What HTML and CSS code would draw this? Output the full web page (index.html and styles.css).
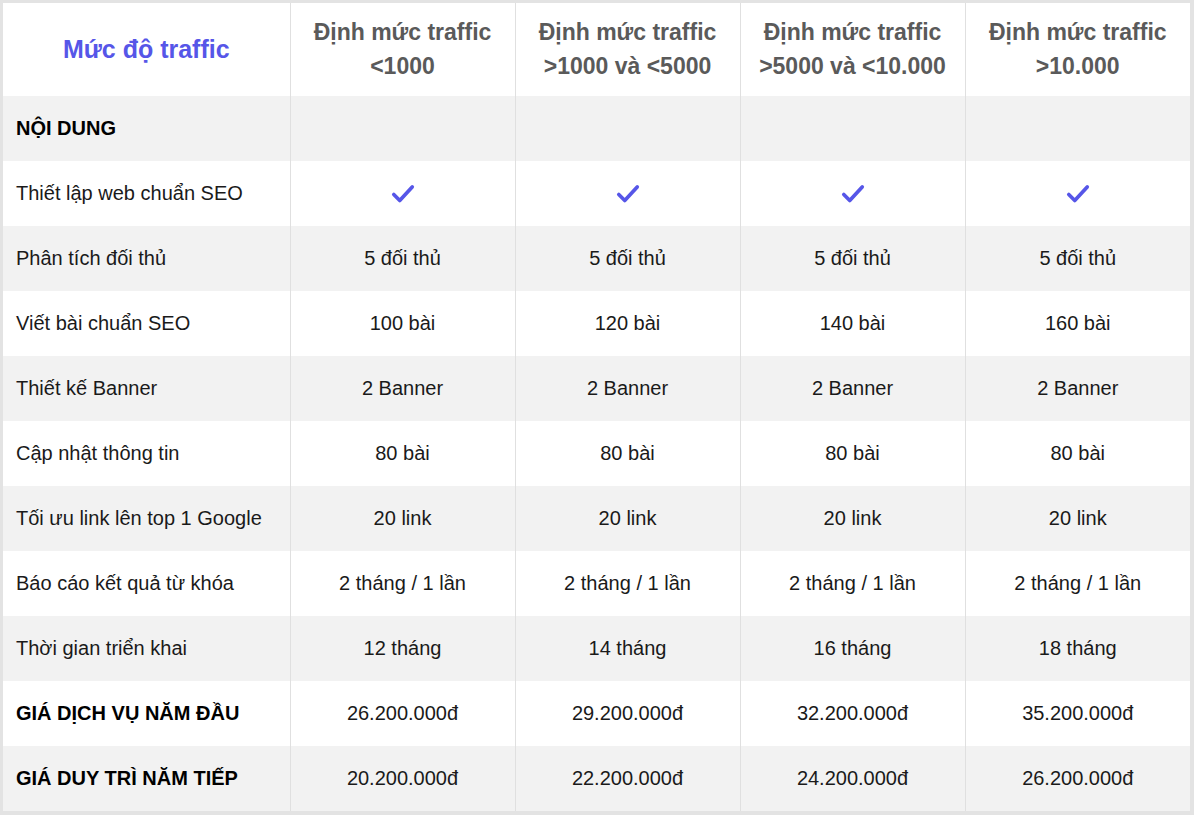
FILE: index.html
```html
<!DOCTYPE html>
<html lang="vi">
<head>
<meta charset="utf-8">
<title>Bảng giá SEO</title>
<link rel="stylesheet" href="styles.css">
</head>
<body>
<div class="frame">
<table class="pricing">
  <colgroup>
    <col class="c-label"><col class="c-plan"><col class="c-plan"><col class="c-plan"><col class="c-plan">
  </colgroup>
  <thead>
    <tr class="head">
      <th class="title">Mức độ traffic</th>
      <th>Định mức traffic<br>&lt;1000</th>
      <th>Định mức traffic<br>&gt;1000 và &lt;5000</th>
      <th>Định mức traffic<br>&gt;5000 và &lt;10.000</th>
      <th>Định mức traffic<br>&gt;10.000</th>
    </tr>
  </thead>
  <tbody>
    <tr class="alt"><td class="bold">NỘI DUNG</td><td></td><td></td><td></td><td></td></tr>
    <tr>
      <td>Thiết lập web chuẩn SEO</td>
      <td><svg class="check" viewBox="0 0 24 24"><path d="M3.5 12.5 L9 18 L20.5 5.5"/></svg></td>
      <td><svg class="check" viewBox="0 0 24 24"><path d="M3.5 12.5 L9 18 L20.5 5.5"/></svg></td>
      <td><svg class="check" viewBox="0 0 24 24"><path d="M3.5 12.5 L9 18 L20.5 5.5"/></svg></td>
      <td><svg class="check" viewBox="0 0 24 24"><path d="M3.5 12.5 L9 18 L20.5 5.5"/></svg></td>
    </tr>
    <tr class="alt"><td>Phân tích đối thủ</td><td>5 đối thủ</td><td>5 đối thủ</td><td>5 đối thủ</td><td>5 đối thủ</td></tr>
    <tr><td>Viết bài chuẩn SEO</td><td>100 bài</td><td>120 bài</td><td>140 bài</td><td>160 bài</td></tr>
    <tr class="alt"><td>Thiết kế Banner</td><td>2 Banner</td><td>2 Banner</td><td>2 Banner</td><td>2 Banner</td></tr>
    <tr><td>Cập nhật thông tin</td><td>80 bài</td><td>80 bài</td><td>80 bài</td><td>80 bài</td></tr>
    <tr class="alt"><td>Tối ưu link lên top 1 Google</td><td>20 link</td><td>20 link</td><td>20 link</td><td>20 link</td></tr>
    <tr><td>Báo cáo kết quả từ khóa</td><td>2 tháng / 1 lần</td><td>2 tháng / 1 lần</td><td>2 tháng / 1 lần</td><td>2 tháng / 1 lần</td></tr>
    <tr class="alt"><td>Thời gian triển khai</td><td>12 tháng</td><td>14 tháng</td><td>16 tháng</td><td>18 tháng</td></tr>
    <tr><td class="bold">GIÁ DỊCH VỤ NĂM ĐẦU</td><td>26.200.000đ</td><td>29.200.000đ</td><td>32.200.000đ</td><td>35.200.000đ</td></tr>
    <tr class="alt"><td class="bold">GIÁ DUY TRÌ NĂM TIẾP</td><td>20.200.000đ</td><td>22.200.000đ</td><td>24.200.000đ</td><td>26.200.000đ</td></tr>
  </tbody>
</table>
</div>
</body>
</html>
```
FILE: styles.css
```css
html, body {
  margin: 0;
  padding: 0;
  background: #e3e3e3;
}
.frame {
  padding: 3px 4px 3px 3px;
  width: 1187px;
}
.pricing {
  width: 1187px;
  border-collapse: collapse;
  table-layout: fixed;
  font-family: "Liberation Sans", Arial, sans-serif;
  background: #ffffff;
}
.c-label { width: 287px; }
.c-plan { width: 225px; }
.pricing th,
.pricing td {
  padding: 0;
  border-left: 1px solid #e0e0e0;
  text-align: center;
  vertical-align: middle;
}
.pricing th:first-child,
.pricing td:first-child {
  border-left: none;
}
.head th {
  height: 93px;
  font-size: 23px;
  line-height: 34px;
  font-weight: bold;
  color: #5a5a5a;
  background: #ffffff;
  padding-bottom: 2px;
  box-sizing: border-box;
}
.head th.title {
  color: #5656e8;
  font-size: 25px;
}
.pricing td {
  height: 65px;
  font-size: 20px;
  color: #1a1a1a;
  box-sizing: border-box;
}
.pricing td:first-child {
  text-align: left;
  padding-left: 13px;
}
.pricing td.bold {
  font-weight: bold;
  color: #000000;
}
.pricing tr.alt td {
  background: #f2f2f2;
}
.check {
  width: 26px;
  height: 26px;
  display: block;
  margin: 0 auto;
  fill: none;
  stroke: #5656e8;
  stroke-width: 3.4;
  stroke-linecap: round;
  stroke-linejoin: round;
}
```
